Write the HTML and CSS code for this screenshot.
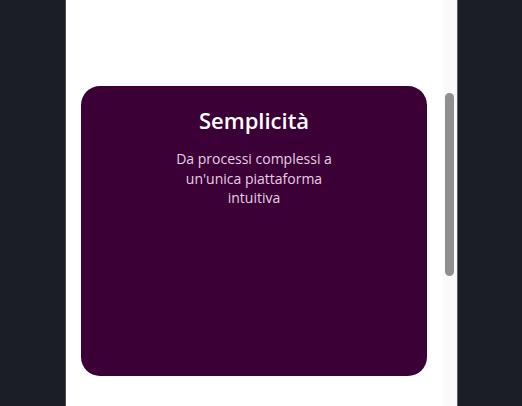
FILE: index.html
```html
<!DOCTYPE html>
<html lang="it">
<head>
  <meta charset="UTF-8">
  <meta name="viewport" content="width=device-width, initial-scale=1.0">
  <title>Semplicità</title>
  <link rel="stylesheet" href="styles.css">
</head>
<body>

<div class="frame">
  <!-- Contenuto della pagina -->
  <main class="page">
    <section class="card">
      <h2>Semplicità</h2>
      <p>Da processi complessi a un'unica piattaforma intuitiva</p>
    </section>
  </main>

  <!-- Barra di scorrimento -->
  <div class="scroll-track">
    <div class="scroll-thumb"></div>
  </div>
</div>

</body>
</html>
```

FILE: styles.css
```css
/* Stili generali */
body {
  margin: 0;
  padding: 0;
  background-color: #1b1e25;
  font-family: 'Open Sans', 'Lato', sans-serif;
  height: 406px;
  overflow: hidden;
}

.frame {
  display: flex;
  width: 391px;
  height: 406px;
  margin-left: 65px;
  border-left: 1px solid #4a4d55;
  border-right: 1px solid #5a5d64;
  background-color: #ffffff;
}

.page {
  flex: 1;
  padding-top: 86px;
  padding-left: 15px;
}

/* Card */
.card {
  width: 346px;
  height: 290px;
  box-sizing: border-box;
  background-color: #3b0036;
  border-radius: 19px;
  padding-top: 19px;
  text-align: center;
  color: #ffffff;
}

.card h2 {
  margin: 0;
  font-size: 22px;
  font-weight: 600;
  line-height: 30px;
}

.card p {
  width: 176px;
  margin: 14px auto 0;
  font-size: 14px;
  line-height: 19.5px;
  color: #e6cfe3;
}

/* Scrollbar */
.scroll-track {
  width: 14px;
  background-color: #fafafa;
  padding-top: 93px;
  box-sizing: border-box;
}

.scroll-thumb {
  width: 9px;
  height: 183px;
  margin-left: 2px;
  border-radius: 5px;
  background-color: #8f8f8f;
}
```
